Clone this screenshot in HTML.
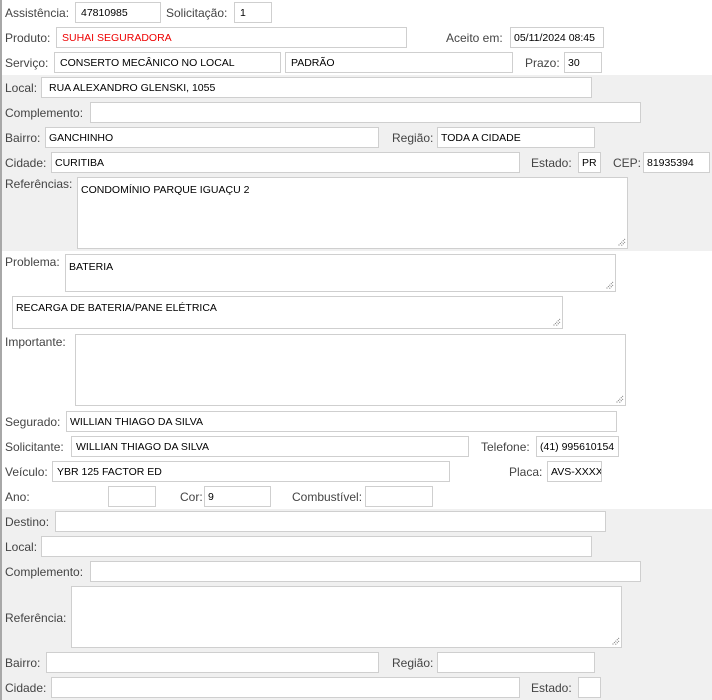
<!DOCTYPE html>
<html><head><meta charset="utf-8"><style>
*{margin:0;padding:0;box-sizing:border-box}
body{width:712px;height:700px;position:relative;background:#fff;overflow:hidden;font-family:"Liberation Sans","DejaVu Sans",sans-serif}
.g{position:absolute;left:0;width:712px;background:#f0f0f0}
.l{position:absolute;font-size:12px;color:#444;line-height:14px;white-space:nowrap}
.i{position:absolute;background:#fff;border:1px solid #cfcfcf;font-size:10.5px;color:#000;padding-left:5px;padding-top:1px;white-space:nowrap;overflow:hidden;display:flex;align-items:center;line-height:12px}
.t{position:absolute;background:#fff;border:1px solid #cfcfcf;font-size:10.5px;color:#000;padding:6px 0 0 3px;white-space:nowrap;overflow:hidden}
.t svg{position:absolute;right:1px;bottom:1px}
#lb{position:absolute;left:0;top:0;width:2px;height:700px;background:#a8a8a8}
</style></head><body>
<div class="g" style="top:75px;height:176px"></div>
<div class="g" style="top:509px;height:191px"></div>
<div id="lb"></div>

<div class="l" style="left:5px;top:6px">Assistência:</div>
<div class="i" style="left:75px;top:2px;width:86px;height:21px">47810985</div>
<div class="l" style="left:166px;top:6px">Solicitação:</div>
<div class="i" style="left:234px;top:2px;width:38px;height:21px">1</div>

<div class="l" style="left:5px;top:31px">Produto:</div>
<div class="i" style="left:56px;top:27px;width:351px;height:21px;color:#e00">SUHAI SEGURADORA</div>
<div class="l" style="left:446px;top:31px">Aceito em:</div>
<div class="i" style="left:510px;top:27px;width:94px;height:21px;padding-left:3px">05/11/2024 08:45</div>

<div class="l" style="left:5px;top:56px">Serviço:</div>
<div class="i" style="left:54px;top:52px;width:227px;height:21px">CONSERTO MECÂNICO NO LOCAL</div>
<div class="i" style="left:285px;top:52px;width:228px;height:21px">PADRÃO</div>
<div class="l" style="left:525px;top:56px">Prazo:</div>
<div class="i" style="left:564px;top:52px;width:38px;height:21px;padding-left:3px">30</div>

<div class="l" style="left:5px;top:81px">Local:</div>
<div class="i" style="left:41px;top:77px;width:551px;height:21px;padding-left:7px">RUA ALEXANDRO GLENSKI, 1055</div>
<div class="l" style="left:5px;top:106px">Complemento:</div>
<div class="i" style="left:90px;top:102px;width:551px;height:21px"></div>
<div class="l" style="left:5px;top:131px">Bairro:</div>
<div class="i" style="left:45px;top:127px;width:334px;height:21px;padding-left:3px">GANCHINHO</div>
<div class="l" style="left:392px;top:131px">Região:</div>
<div class="i" style="left:437px;top:127px;width:158px;height:21px;padding-left:3px">TODA A CIDADE</div>
<div class="l" style="left:5px;top:156px">Cidade:</div>
<div class="i" style="left:51px;top:152px;width:469px;height:21px;padding-left:3px">CURITIBA</div>
<div class="l" style="left:531px;top:156px">Estado:</div>
<div class="i" style="left:578px;top:152px;width:23px;height:21px;padding-left:3px">PR</div>
<div class="l" style="left:613px;top:156px">CEP:</div>
<div class="i" style="left:643px;top:152px;width:67px;height:21px;padding-left:3px">81935394</div>
<div class="l" style="left:5px;top:177px">Referências:</div>
<div class="t" style="left:77px;top:177px;width:551px;height:72px">CONDOMÍNIO PARQUE IGUAÇU 2<svg width="9" height="9"><path d="M8 1L1 8M8 4L4 8" stroke="#777" stroke-width="1" stroke-dasharray="1 1"/></svg></div>

<div class="l" style="left:5px;top:255px">Problema:</div>
<div class="t" style="left:65px;top:254px;width:551px;height:38px">BATERIA<svg width="9" height="9"><path d="M8 1L1 8M8 4L4 8" stroke="#777" stroke-width="1" stroke-dasharray="1 1"/></svg></div>
<div class="t" style="left:12px;top:296px;width:551px;height:33px;padding-top:5px">RECARGA DE BATERIA/PANE ELÉTRICA<svg width="9" height="9"><path d="M8 1L1 8M8 4L4 8" stroke="#777" stroke-width="1" stroke-dasharray="1 1"/></svg></div>
<div class="l" style="left:5px;top:335px">Importante:</div>
<div class="t" style="left:75px;top:334px;width:551px;height:72px"><svg width="9" height="9"><path d="M8 1L1 8M8 4L4 8" stroke="#777" stroke-width="1" stroke-dasharray="1 1"/></svg></div>

<div class="l" style="left:5px;top:415px">Segurado:</div>
<div class="i" style="left:66px;top:411px;width:551px;height:21px;padding-left:3px">WILLIAN THIAGO DA SILVA</div>
<div class="l" style="left:5px;top:440px">Solicitante:</div>
<div class="i" style="left:71px;top:436px;width:398px;height:21px;padding-left:4px">WILLIAN THIAGO DA SILVA</div>
<div class="l" style="left:481px;top:440px">Telefone:</div>
<div class="i" style="left:536px;top:436px;width:83px;height:21px;padding-left:3px">(41) 995610154</div>
<div class="l" style="left:5px;top:465px">Veículo:</div>
<div class="i" style="left:52px;top:461px;width:398px;height:21px;padding-left:4px">YBR 125 FACTOR ED</div>
<div class="l" style="left:509px;top:465px">Placa:</div>
<div class="i" style="left:547px;top:461px;width:55px;height:21px;padding-left:3px">AVS-XXXX</div>
<div class="l" style="left:5px;top:490px">Ano:</div>
<div class="i" style="left:108px;top:486px;width:48px;height:21px"></div>
<div class="l" style="left:180px;top:490px">Cor:</div>
<div class="i" style="left:204px;top:486px;width:67px;height:21px;padding-left:3px">9</div>
<div class="l" style="left:292px;top:490px">Combustível:</div>
<div class="i" style="left:365px;top:486px;width:68px;height:21px"></div>

<div class="l" style="left:5px;top:515px">Destino:</div>
<div class="i" style="left:55px;top:511px;width:551px;height:21px"></div>
<div class="l" style="left:5px;top:540px">Local:</div>
<div class="i" style="left:41px;top:536px;width:551px;height:21px"></div>
<div class="l" style="left:5px;top:565px">Complemento:</div>
<div class="i" style="left:90px;top:561px;width:551px;height:21px"></div>
<div class="l" style="left:5px;top:611px">Referência:</div>
<div class="t" style="left:71px;top:586px;width:551px;height:62px"><svg width="9" height="9"><path d="M8 1L1 8M8 4L4 8" stroke="#777" stroke-width="1" stroke-dasharray="1 1"/></svg></div>
<div class="l" style="left:5px;top:656px">Bairro:</div>
<div class="i" style="left:46px;top:652px;width:333px;height:21px"></div>
<div class="l" style="left:392px;top:656px">Região:</div>
<div class="i" style="left:437px;top:652px;width:158px;height:21px"></div>
<div class="l" style="left:5px;top:681px">Cidade:</div>
<div class="i" style="left:51px;top:677px;width:469px;height:21px"></div>
<div class="l" style="left:531px;top:681px">Estado:</div>
<div class="i" style="left:578px;top:677px;width:23px;height:21px"></div>
</body></html>
